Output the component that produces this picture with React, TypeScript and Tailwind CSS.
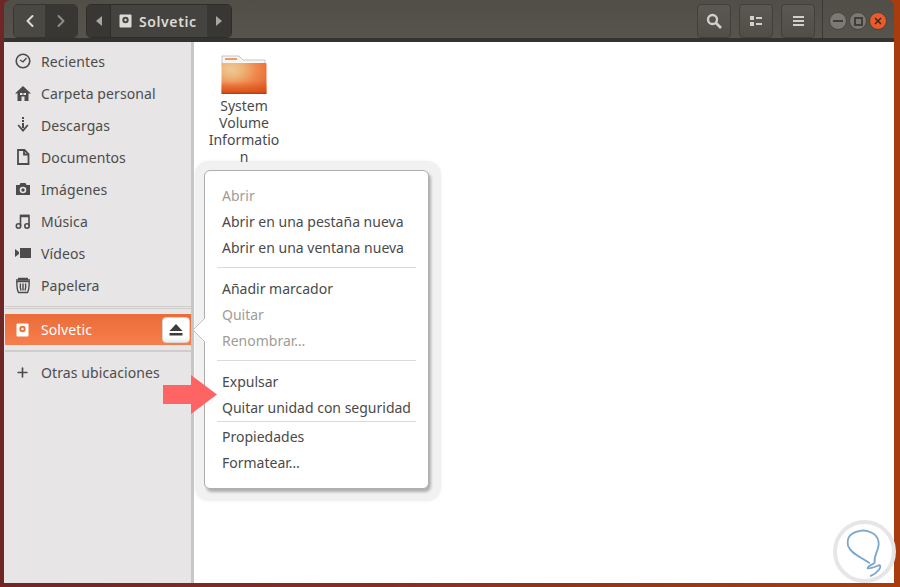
import { Plus, ChevronLeft, ChevronRight } from "lucide-react";

const font = "font-['Noto_Sans','Liberation_Sans',sans-serif]";
const ink = "#4c4c4c";

function DriveIcon({ light }: { light?: boolean }) {
  return (
    <svg width="13" height="14" viewBox="0 0 13 14">
      <rect x="0.5" y="0.5" width="12" height="13" rx="1" fill={light ? "#ffffff" : "#dcdbd6"} />
      <circle cx="6.5" cy="6" r="3.2" fill={light ? "#ef7239" : "#4a4843"} />
      <circle cx="6.5" cy="6" r="1.2" fill={light ? "#ffffff" : "#dcdbd6"} />
    </svg>
  );
}

function Folder() {
  return (
    <svg width="46" height="40" viewBox="0 0 46 40">
      <defs>
        <radialGradient id="fold" cx="0.22" cy="0.2" r="1">
          <stop offset="0" stopColor="#edc997" />
          <stop offset="0.25" stopColor="#eeb57a" />
          <stop offset="0.55" stopColor="#ef8a50" />
          <stop offset="1" stopColor="#e4602a" />
        </radialGradient>
        <linearGradient id="foldBottom" x1="0" y1="0" x2="0" y2="1">
          <stop offset="0.6" stopColor="#dc4f17" stopOpacity="0" />
          <stop offset="1" stopColor="#dc4f17" stopOpacity="1" />
        </linearGradient>
      </defs>
      <path d="M1 1h17l4 4h22v6H1z" fill="#f7f6f3" stroke="#bdb9b3" strokeWidth="0.8" />
      <rect x="4" y="3" width="12" height="2" fill="#ee9a62" />
      <rect x="0.5" y="8" width="45" height="30.5" rx="1" fill="url(#fold)" />
      <rect x="0.5" y="8" width="45" height="30.5" rx="1" fill="url(#foldBottom)" />
      <rect x="0.5" y="37.5" width="45" height="1.5" fill="#b5431a" />
    </svg>
  );
}

function Row({ icon, label }: { icon: React.ReactNode; label: string }) {
  return (
    <div className="h-8 flex items-center pl-[11px] text-[#4c4c4c]">
      <span className="w-[26px] flex items-center">{icon}</span>
      <span className="text-[14px] tracking-[0.1px]">{label}</span>
    </div>
  );
}

function MenuItem({ label, off }: { label: string; off?: boolean }) {
  return (
    <div className={`h-[26px] flex items-center pl-[17px] text-[14px] ${off ? "text-[#a19c96]" : "text-[#4a4a4a]"}`}>
      {label}
    </div>
  );
}

function ToolButton({ children }: { children: React.ReactNode }) {
  return (
    <div className="w-[34px] h-[34px] rounded-[4px] border border-[#403f3a] bg-gradient-to-b from-[#5a5850] to-[#504e47] flex items-center justify-center text-[#d2d0ca]">
      {children}
    </div>
  );
}

function WinButton({ children, close }: { children: React.ReactNode; close?: boolean }) {
  return (
    <div className={`w-[18px] h-[18px] rounded-full border border-[#45443f] flex items-center justify-center ${close ? "bg-[#ea5a2a]" : "bg-[#7b7972]"}`}>
      {children}
    </div>
  );
}

export default function App() {
  return (
    <div className={`relative w-[900px] h-[587px] overflow-hidden bg-gradient-to-r from-[#6e2626] to-[#a83c0e] ${font}`}>
      <div className="h-[583px] ml-[4px] mr-[6px] flex flex-col rounded-t-[6px] overflow-hidden">
        {/* Toolbar */}
        <div className="h-[42px] shrink-0 flex items-start pt-[4px] pl-[9px] pr-[7px] bg-gradient-to-b from-[#504e47] to-[#56544c] border-b-[4px] border-[#33332f]">
          <div className="flex h-[34px] w-[65px] rounded-[5px] border border-[#36352f] overflow-hidden">
            <div className="w-[31px] bg-[#4a4843] flex items-center justify-center text-[#dedcd6]">
              <ChevronLeft size={20} strokeWidth={2.4} />
            </div>
            <div className="flex-1 bg-[#383734] flex items-center justify-center text-[#8e8c86]">
              <ChevronRight size={20} strokeWidth={2.4} />
            </div>
          </div>
          <div className="ml-[8px] flex h-[34px] w-[146px] rounded-[5px] border border-[#2e2d2a] overflow-hidden">
            <div className="w-[24px] bg-[#383734] border-r border-[#2e2d2a] flex items-center justify-center">
              <svg width="6" height="10" viewBox="0 0 6 10"><path d="M6 0v10L0 5z" fill="#a8a6a0" /></svg>
            </div>
            <div className="flex-1 bg-[#45433f] flex items-center pl-[8px] gap-[7px]">
              <DriveIcon />
              <span className="text-[14px] font-semibold text-[#dddbd5] tracking-[0.6px]">Solvetic</span>
            </div>
            <div className="w-[24px] bg-[#383734] flex items-center justify-center">
              <svg width="6" height="10" viewBox="0 0 6 10"><path d="M0 0v10l6-5z" fill="#a8a6a0" /></svg>
            </div>
          </div>
          <div className="ml-auto flex items-center">
            <div className="flex gap-[8px]">
              <ToolButton>
                <svg width="16" height="16" viewBox="0 0 16 16" fill="none" stroke="currentColor">
                  <circle cx="6.500" cy="6.500" r="4.500" strokeWidth="2.300" />
                  <path d="M10 10l5 5" strokeWidth="2.600" />
                </svg>
              </ToolButton>
              <ToolButton>
                <svg width="12" height="10" viewBox="0 0 12 10" fill="currentColor">
                  <rect x="0" y="0" width="4" height="4" />
                  <rect x="0" y="6" width="4" height="4" />
                  <rect x="6" y="1" width="6" height="2" />
                  <rect x="6" y="7" width="6" height="2" />
                </svg>
              </ToolButton>
              <ToolButton>
                <svg width="11" height="10" viewBox="0 0 11 10" fill="currentColor">
                  <rect y="0" width="11" height="2" />
                  <rect y="4" width="11" height="2" />
                  <rect y="8" width="11" height="2" />
                </svg>
              </ToolButton>
            </div>
            <div className="w-px h-[38px] -mt-[4px] bg-[#3a3935] ml-[7px] mr-[6px]" />
            <div className="flex gap-[2px]">
              <WinButton><span className="w-[10px] h-[2px] bg-[#3f3e3a]" /></WinButton>
              <WinButton><span className="w-[9px] h-[9px] border-2 border-[#3f3e3a]" /></WinButton>
              <WinButton close>
                <svg width="8" height="8" viewBox="0 0 8 8"><path d="M1 1l6 6M7 1L1 7" stroke="#3a2a20" strokeWidth="1.500" /></svg>
              </WinButton>
            </div>
          </div>
        </div>

        <div className="flex-1 flex min-h-0">
          {/* Sidebar */}
          <div className="w-[190px] shrink-0 bg-[#e7e5e6] border-r-[3px] border-[#c9c7c6] pt-[3px]">
            <Row
              icon={
                <svg width="16" height="16" viewBox="0 0 16 16" fill="none" stroke={ink}>
                  <circle cx="8" cy="8" r="6.800" strokeWidth="1.600" />
                  <path d="M11.500 5L8 8.800 5 7" strokeWidth="1.300" />
                </svg>
              }
              label="Recientes"
            />
            <Row
              icon={
                <svg width="16" height="15" viewBox="0 0 16 15" fill={ink}>
                  <path fillRule="evenodd" d="M8 0L0 7.500h2.500V15h4v-4.500h3V15h4V7.500H16zM5 7h2.500v2H5zM8.500 7H11v2H8.500z" />
                </svg>
              }
              label="Carpeta personal"
            />
            <Row
              icon={
                <svg width="16" height="16" viewBox="0 0 16 16" fill={ink}>
                  <rect x="7" y="0" width="2" height="2" />
                  <rect x="7" y="3" width="2" height="2" />
                  <rect x="7" y="6" width="2" height="5" />
                  <path d="M2.500 8.500L8 15l5.500-6.500-1.300-.9L8 12.300 3.800 7.600z" />
                </svg>
              }
              label="Descargas"
            />
            <Row
              icon={
                <svg width="16" height="16" viewBox="0 0 16 16" fill="none" stroke={ink} strokeWidth="1.800">
                  <path d="M3 1h6.500L13.500 5v10H3z" />
                  <path d="M9 1v4.500h4.500" />
                </svg>
              }
              label="Documentos"
            />
            <Row
              icon={
                <svg width="16" height="14" viewBox="0 0 16 14">
                  <path d="M1 3h3.500l1-2h5l1 2H15v10H1z" fill={ink} />
                  <circle cx="8" cy="8" r="3.300" fill="#e7e5e6" />
                  <circle cx="8" cy="8" r="1.700" fill={ink} />
                </svg>
              }
              label="Imágenes"
            />
            <Row
              icon={
                <svg width="16" height="16" viewBox="0 0 16 16" fill="none" stroke={ink}>
                  <path d="M5.500 12.500V2.500h8.500v10" strokeWidth="1.600" />
                  <path d="M5.500 3h8.500" strokeWidth="2.500" />
                  <circle cx="3.500" cy="13" r="2.200" strokeWidth="1.600" />
                  <circle cx="12" cy="13" r="2.200" strokeWidth="1.600" />
                </svg>
              }
              label="Música"
            />
            <Row
              icon={
                <svg width="16" height="12" viewBox="0 0 16 12" fill={ink}>
                  <rect x="5" y="1" width="11" height="10" />
                  <path d="M0 2l4 3v2l-4 3z" />
                </svg>
              }
              label="Vídeos"
            />
            <Row
              icon={
                <svg width="16" height="17" viewBox="0 0 16 17" fill="none" stroke={ink} strokeWidth="1.400">
                  <path d="M1 3h14M3 1.500h10" />
                  <path d="M1.800 4.500c0 4 .5 9 1.700 11h9c1.200-2 1.700-7 1.700-11z" />
                  <path d="M5.500 6.500c-.4 2-.2 5 .5 7M8 6.500v7M10.500 6.500c.4 2 .2 5-.5 7" />
                </svg>
              }
              label="Papelera"
            />
            <div className="ml-px mt-[5px] h-[3px] border-y border-[#cfcdcc]" />
            <div className="ml-px mt-[5px] h-[31px] flex items-center pl-[11px] bg-gradient-to-b from-[#ea6c38] to-[#f57f4d] text-white">
              <span className="w-[25px] flex items-center"><DriveIcon light /></span>
              <span className="text-[14px] tracking-[0.1px]">Solvetic</span>
            </div>
            <div className="ml-px mt-[5px] h-[2px] bg-[#cfcdcc]" />
            <div className="mt-[4px]">
              <Row icon={<Plus size={15} strokeWidth={2.6} />} label="Otras ubicaciones" />
            </div>
          </div>

          {/* Files */}
          <div className="flex-1 bg-white pt-[13px] pl-[12px]">
            <div className="w-[76px] flex flex-col items-center">
              <Folder />
              <div className="mt-[2px] w-full text-[14px] leading-[17px] text-[#4a4a4a] text-center [overflow-wrap:anywhere]">
                System Volume Information
              </div>
            </div>
          </div>
        </div>
      </div>

      {/* Eject button over the selected row */}
      <div className="absolute left-[162px] top-[317px] w-[28px] h-[26px] rounded-[4px] border border-[#d8d5d2] bg-gradient-to-b from-white from-80% to-[#ecebe9] flex items-center justify-center">
        <svg width="14" height="12" viewBox="0 0 14 12" fill="#3d3d3d">
          <path d="M7 0l6.500 7h-13z" />
          <rect x="0.500" y="9" width="13" height="2.500" />
        </svg>
      </div>

      {/* Popover */}
      <div className="absolute left-[195px] top-[161px] w-[246px] h-[340px] rounded-[14px] bg-[#8080801c] shadow-[0_0_3px_rgba(128,128,128,0.12)]" />
      <div className="absolute left-[204px] top-[170px] w-[225px] h-[319px] rounded-[6px] bg-white border border-[#b0aeaa] shadow-[2px_3px_3px_rgba(0,0,0,0.28)] pt-[11px]">
        <MenuItem label="Abrir" off />
        <MenuItem label="Abrir en una pestaña nueva" />
        <MenuItem label="Abrir en una ventana nueva" />
        <div className="mx-[12px] mt-[7px] mb-[7px] h-px bg-[#dcdad8]" />
        <MenuItem label="Añadir marcador" />
        <MenuItem label="Quitar" off />
        <MenuItem label="Renombrar…" off />
        <div className="mx-[12px] mt-[7px] mb-[7px] h-px bg-[#dcdad8]" />
        <MenuItem label="Expulsar" />
        <MenuItem label="Quitar unidad con seguridad" />
        <div className="mx-[12px] mt-px mb-px h-px bg-[#dcdad8]" />
        <MenuItem label="Propiedades" />
        <MenuItem label="Formatear…" />
      </div>
      <svg className="absolute left-[193px] top-[318px]" width="13" height="24" viewBox="0 0 13 24">
        <path d="M12 0L0 12l12 12z" fill="#ffffff" />
        <path d="M12 0L0 12l12 12" fill="none" stroke="#c4c2bf" />
      </svg>

      {/* Red annotation arrow */}
      <svg className="absolute left-[163px] top-[375px]" width="54" height="39" viewBox="0 0 54 39">
        <path d="M0 10h28V0l26 19.500L28 39V29H0z" fill="#ff6464" />
      </svg>

      {/* Watermark */}
      <div className="absolute left-[833px] top-[520px] w-[63px] h-[63px] rounded-full bg-white border-[4px] border-[#e6e6e6] overflow-hidden">
        <svg className="w-full h-full" viewBox="104 64 181 181" fill="none" stroke="#7ba7cf" strokeWidth="6" strokeLinecap="round">
          <path d="M210 192c-20-17-60-27-70-57-5-30 10-45 50-50 45 5 55 30 50 55-5 20-15 30-12 50 2 5-23 10-23 20 10 3 40-13 40-10 5 5-5 25-30 35" />
        </svg>
      </div>
    </div>
  );
}
